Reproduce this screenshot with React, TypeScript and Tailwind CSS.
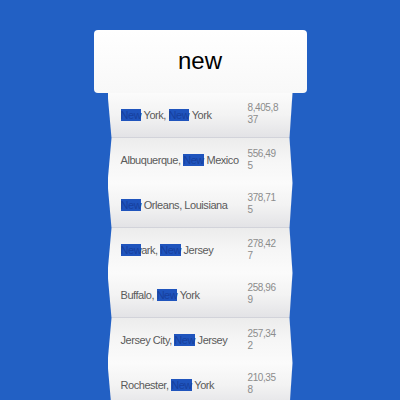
import React from 'react'

type City = { name: string; pop: [string, string] }

const cities: City[] = [
  { name: 'New York, New York', pop: ['8,405,8', '37'] },
  { name: 'Albuquerque, New Mexico', pop: ['556,49', '5'] },
  { name: 'New Orleans, Louisiana', pop: ['378,71', '5'] },
  { name: 'Newark, New Jersey', pop: ['278,42', '7'] },
  { name: 'Buffalo, New York', pop: ['258,96', '9'] },
  { name: 'Jersey City, New Jersey', pop: ['257,34', '2'] },
  { name: 'Rochester, New York', pop: ['210,35', '8'] },
]

function Highlighted({ text }: { text: string }) {
  const parts = text.split(/(New)/g)
  return (
    <>
      {parts.map((p, i) =>
        p === 'New' ? (
          <span key={i} className="bg-[#1f54bd] text-[#17409e]">{p}</span>
        ) : (
          <span key={i}>{p}</span>
        )
      )}
    </>
  )
}

export default function App() {
  return (
    <div className="w-[400px] h-[400px] overflow-hidden bg-[#2260c4] flex flex-col items-center pt-[30px] font-['Liberation_Sans',Arial,sans-serif]">
      {/* search box */}
      <div className="w-[213px] h-[63px] shrink-0 bg-gradient-to-b from-white to-[#f8f8f8] rounded-[4px] flex items-center justify-center">
        <span className="text-[24px] text-black leading-none pb-[2px]">new</span>
      </div>

      {/* folded list */}
      <div className="w-[185px] flex flex-col">
        {cities.map((c, i) => {
          const odd = i % 2 === 0
          return (
            <div
              key={c.name}
              className={
                odd
                  ? 'h-[45px] shrink-0 flex items-center pl-[13px] bg-gradient-to-b from-[#fbfbfb] via-[#f3f3f3] to-[#e3e3e6] border-b border-[#d2d3da] [clip-path:polygon(0_0,100%_0,calc(100%-3px)_100%,4px_100%)]'
                  : 'h-[45px] shrink-0 flex items-center pl-[13px] bg-gradient-to-b from-[#ececec] via-[#f6f6f6] to-[#fbfbfb] [clip-path:polygon(4px_0,calc(100%-3px)_0,100%_100%,0_100%)]'
              }
            >
              <div className="w-[127px] text-[11px] tracking-[-0.45px] text-[#5a5a5a] whitespace-nowrap">
                <Highlighted text={c.name} />
              </div>
              <div className="text-[10px] leading-[12px] tracking-[-0.4px] text-[#8c8c8c] pb-[2px]">
                <div>{c.pop[0]}</div>
                <div>{c.pop[1]}</div>
              </div>
            </div>
          )
        })}
      </div>
    </div>
  )
}
